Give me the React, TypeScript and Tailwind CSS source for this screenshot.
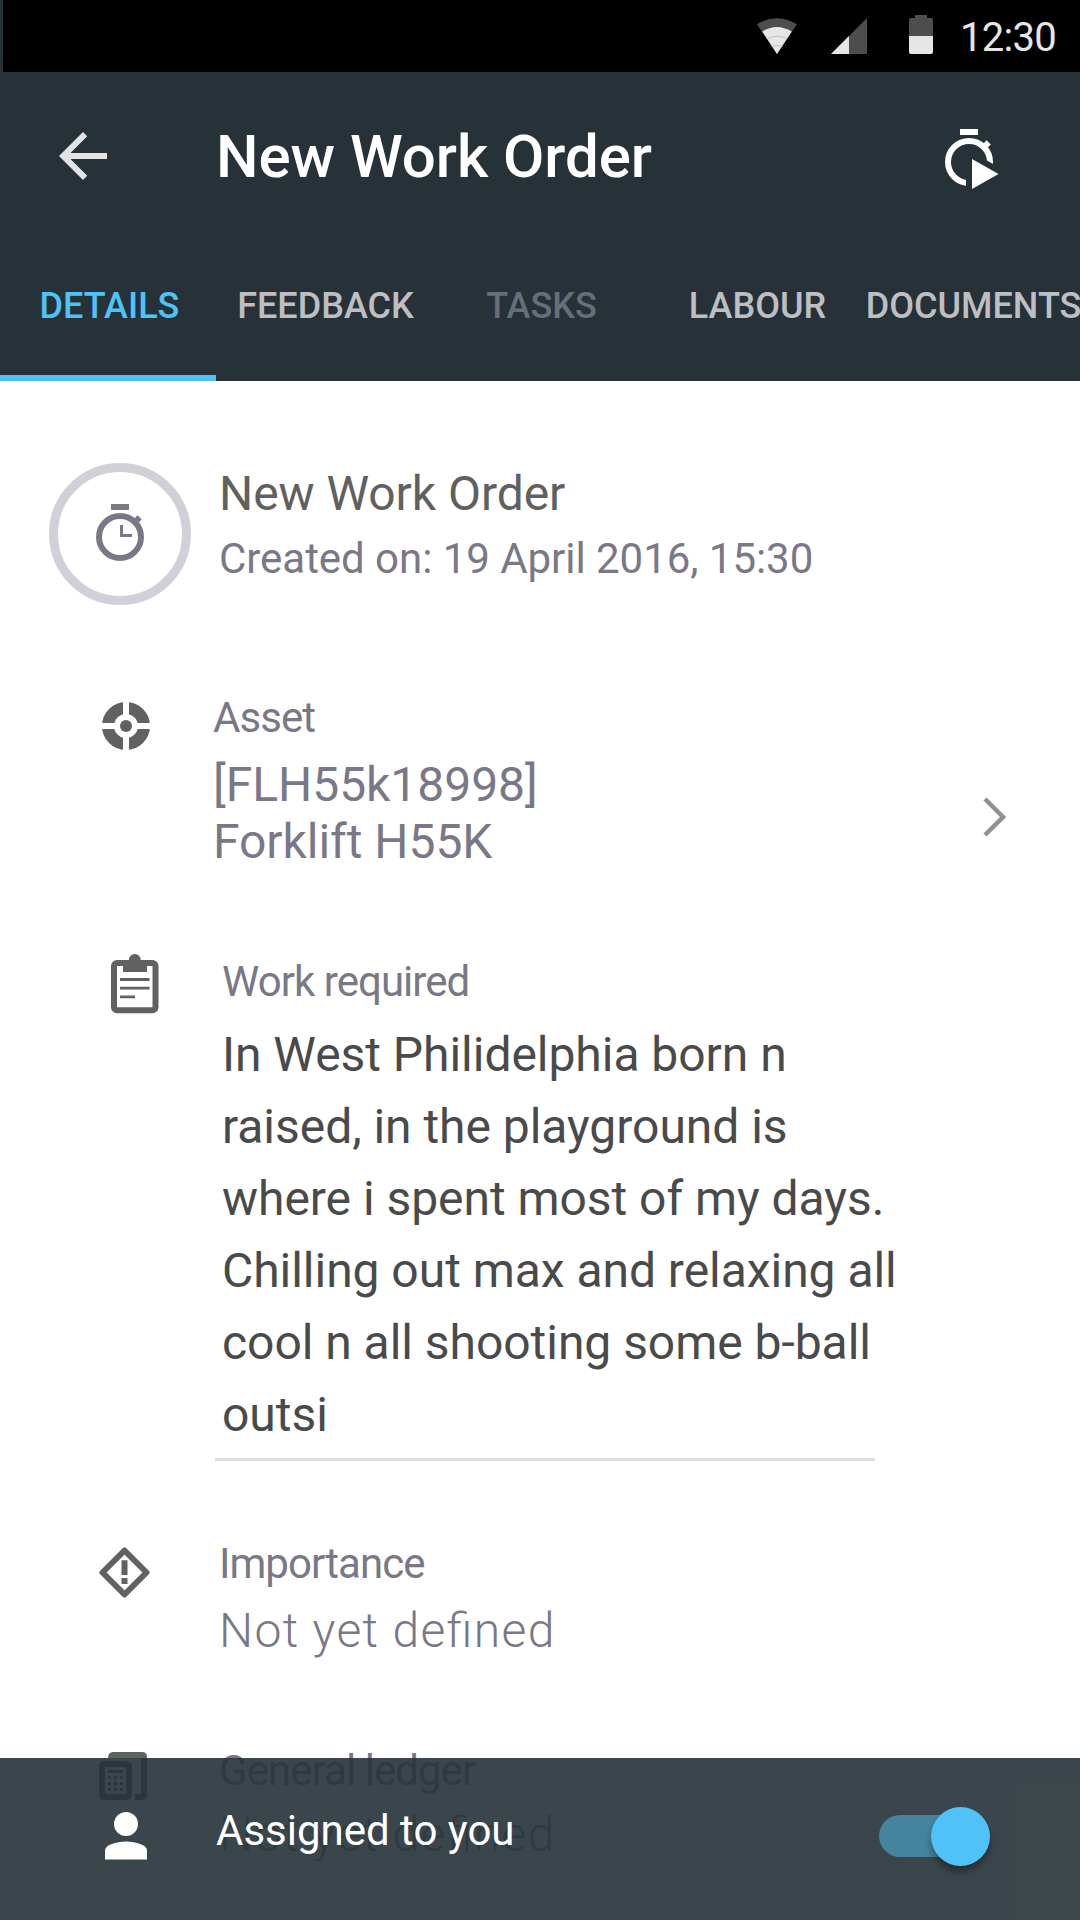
import type { ReactNode } from "react";

const tabs = [
  { label: "DETAILS", color: "text-[#4fc3f7]" },
  { label: "FEEDBACK", color: "text-[#bdbfc3]" },
  { label: "TASKS", color: "text-[#676e77]" },
  { label: "LABOUR", color: "text-[#bdbfc3]" },
  { label: "DOCUMENTS", color: "text-[#bdbfc3]" },
];

const workText = [
  "In West Philidelphia born n",
  "raised, in the playground is",
  "where i spent most of my days.",
  "Chilling out max and relaxing all",
  "cool n all shooting some b-ball",
  "outsi",
];

function WifiIcon() {
  return (
    <svg width="40" height="36" viewBox="0 0 40 36">
      <path d="M0 6.3Q20 -6 40 6.3L20 36Z" fill="#4d4d4d" />
      <path d="M5.2 13.6Q20 4.6 34.8 13.6L20 36Z" fill="#e6e6e6" />
      <path d="M11 20.5Q20 16 29 20.5M14.5 28.5Q20 26.5 25.5 28.5" fill="none" stroke="#b5b5b5" strokeWidth="0.8" />
    </svg>
  );
}

function SignalIcon() {
  return (
    <svg width="36" height="36" viewBox="0 0 36 36">
      <path d="M0 36L36 0V36Z" fill="#4d4d4d" />
      <path d="M0 36L18 18V36Z" fill="#e6e6e6" />
    </svg>
  );
}

function BatteryIcon() {
  return (
    <svg width="24" height="39" viewBox="0 0 24 39">
      <path d="M6 0H18V3H22Q24 3 24 5V21H0V5Q0 3 2 3H6Z" fill="#4d4d4d" />
      <path d="M0 21H24V37Q24 39 22 39H2Q0 39 0 37Z" fill="#e6e6e6" />
    </svg>
  );
}

function BackIcon() {
  return (
    <svg width="72" height="72" viewBox="0 0 24 24" fill="#e3e3e5">
      <path d="M20 11H7.83l5.59-5.59L12 4l-8 8 8 8 1.41-1.41L7.83 13H20v-2z" />
    </svg>
  );
}

function TimerPlayIcon() {
  return (
    <svg width="54" height="60" viewBox="0 0 54 60">
      <clipPath id="ringCut">
        <path d="M0 0H54V38.5L42 31.5H21V60H0Z" />
      </clipPath>
      <rect x="15" width="18" height="6" fill="#fff" />
      <circle cx="24" cy="33" r="21" fill="none" stroke="#fff" strokeWidth="6" clipPath="url(#ringCut)" />
      <path d="M39 18L43.7 13.3" stroke="#fff" strokeWidth="6" />
      <path d="M27 30L53.5 45L27 60Z" fill="#fff" />
    </svg>
  );
}

function TimerIcon() {
  return (
    <svg width="48" height="57" viewBox="0 0 48 57" fill="none" stroke="#7a7886">
      <path d="M15 3H33" strokeWidth="6" />
      <circle cx="24" cy="33" r="21" strokeWidth="6" />
      <path d="M39 18L43.7 13.3" strokeWidth="6" />
      <path d="M25.5 21V31.5H36" strokeWidth="3" />
    </svg>
  );
}

function AssetIcon() {
  return (
    <svg width="48" height="48" viewBox="0 0 48 48">
      <circle cx="24" cy="24" r="18" fill="none" stroke="#606260" strokeWidth="12" />
      <path d="M24 0V48M0 24H48" stroke="#fff" strokeWidth="6" />
      <circle cx="24" cy="24" r="6" fill="#606260" />
    </svg>
  );
}

function ClipboardIcon() {
  return (
    <svg width="48" height="60" viewBox="0 0 48 60" fill="#606260">
      <rect x="3" y="9" width="41.5" height="47.3" rx="3" fill="none" stroke="#606260" strokeWidth="6" />
      <circle cx="23.8" cy="6" r="6" />
      <path d="M12 9H36V18H12ZM9 24H38.500V27H9ZM9 32.700H38.500V35.500H9ZM9 41.500H24V44.300H9Z" />
    </svg>
  );
}

function ImportanceIcon() {
  return (
    <svg width="51" height="51" viewBox="0 0 51 51">
      <path d="M25.500 3.500L47.500 25.500L25.500 47.500L3.500 25.500Z" fill="none" stroke="#606260" strokeWidth="6" strokeLinejoin="round" />
      <path d="M22.500 13.300H28.500V28H22.500ZM22.500 31H28.500V37H22.500Z" fill="#606260" />
    </svg>
  );
}

function LedgerIcon() {
  return (
    <svg width="48" height="48" viewBox="0 0 48 48" fill="#606260">
      <path d="M9 6Q9 0 14 0H43Q48 0 48 5V43Q48 48 43 48H36V42H42V6Z" />
      <rect x="3" y="12" width="27" height="33" rx="2" fill="none" stroke="#606260" strokeWidth="6" />
      <path d="M9 18H24V21H9ZM9 24H12V27H9ZM15 24H18V27H15ZM21 24H24V27H21ZM9 30H12V33H9ZM15 30H18V33H15ZM21 30H24V33H21ZM9 36H12V39H9ZM15 36H18V39H15ZM21 36H24V39H21Z" />
    </svg>
  );
}

function PersonIcon() {
  return (
    <svg width="42" height="48" viewBox="0 0 42 48" fill="#fff">
      <circle cx="21" cy="12" r="12" />
      <path d="M0 47.500V38.500C0 33 11 29.500 21 29.500S42 33 42 38.500V47.500Z" />
    </svg>
  );
}

function Row({ icon, className, children }: { icon: ReactNode; className: string; children: ReactNode }) {
  return (
    <section className={`flex items-start ${className}`}>
      {icon}
      {children}
    </section>
  );
}

function Label({ children }: { children: ReactNode }) {
  return <p className="text-[42px] leading-[48px] tracking-[-0.95px]">{children}</p>;
}

function EmptyValue({ className }: { className: string }) {
  return (
    <p className={`text-[48px] font-light leading-[57px] tracking-[1.35px] [font-feature-settings:'liga'] ${className}`}>
      Not yet defined
    </p>
  );
}

export default function App() {
  return (
    <div className="relative flex h-[1920px] w-[1080px] flex-col overflow-hidden bg-white font-['Roboto',sans-serif]">
      <header className="h-[381px] shrink-0 bg-[#263238]">
        <div className="ml-[3px] flex h-[72px] items-start bg-black">
          <div className="ml-[754px] mt-[18px]"><WifiIcon /></div>
          <div className="ml-[34px] mt-[18px]"><SignalIcon /></div>
          <div className="ml-[42px] mt-[15px]"><BatteryIcon /></div>
          <span className="ml-[27px] mt-[14px] text-[40px] leading-[48px] tracking-[-0.7px] text-[#e6e6e6]">12:30</span>
        </div>
        <div className="flex h-[168px] items-start">
          <div className="ml-[47px] mt-12"><BackIcon /></div>
          <h1 className="ml-[97px] mt-[49px] w-[729px] text-[60px] font-medium leading-[72px] tracking-[-0.05px] text-white">New Work Order</h1>
          <div className="mt-[57px]"><TimerPlayIcon /></div>
        </div>
        <nav className="flex h-[141px]">
          {tabs.map((tab, i) => (
            <div
              key={tab.label}
              className={`flex h-full w-[216px] shrink-0 justify-center pl-[3px] pt-[42px] text-[36px] font-medium leading-[48px] ${tab.color} ${i === 0 ? "border-b-[6px] border-[#4fc3f7]" : ""}`}
            >
              {tab.label}
            </div>
          ))}
        </nav>
      </header>

      <main className="flex flex-col text-[#7a7886]">
        <Row
          className="ml-[49px] mt-[82px] h-[142px]"
          icon={
            <div className="flex size-[142px] items-start justify-center rounded-full border-[9px] border-[#d0d0d9] pt-8">
              <TimerIcon />
            </div>
          }
        >
          <div className="ml-7 mt-[2px]">
            <h2 className="text-[48px] leading-[57px] tracking-[-0.05px] text-[#606060]">New Work Order</h2>
            <p className="mt-[13px] text-[42px] leading-[48px] tracking-[-0.04px]">Created on: 19 April 2016, 15:30</p>
          </div>
        </Row>

        <Row className="ml-[101.500px] mt-[89px] h-[176px]" icon={<div className="mt-2"><AssetIcon /></div>}>
          <div className="ml-[63.500px] w-[770px]">
            <Label>Asset</Label>
            <p className="mt-[14px] text-[48px] leading-[57px] tracking-[-0.04px]">[FLH55k18998]<br />Forklift H55K</p>
          </div>
          <svg className="mt-[102px]" width="24" height="42" viewBox="0 0 24 42" fill="none" stroke="#919194" strokeWidth="4.500">
            <path d="M2 3L20 21L2 39" />
          </svg>
        </Row>

        <Row className="ml-[111px] mt-[84px] h-[506px]" icon={<ClipboardIcon />}>
          <div className="ml-[55.500px] mt-1">
            <div className="pl-[7.500px]"><Label>Work required</Label></div>
            <p className="mt-[13px] w-[660px] whitespace-nowrap border-b-[3px] border-[#dedede] pb-[7px] pl-[7.500px] text-[48px] leading-[72px] tracking-[-0.04px] text-[#4a4a4a]">
              {workText.map((line) => (
                <span key={line} className="block">{line}</span>
              ))}
            </p>
          </div>
        </Row>

        <Row className="ml-[99px] mt-[80px] h-[152px]" icon={<div className="mt-[7px]"><ImportanceIcon /></div>}>
          <div className="ml-[69px]">
            <Label>Importance</Label>
            <EmptyValue className="mt-[14px]" />
          </div>
        </Row>

        <Row className="ml-[99px] mt-[55px]" icon={<div className="mt-[5px]"><LedgerIcon /></div>}>
          <div className="ml-[72px]">
            <Label>General ledger</Label>
            <EmptyValue className="mt-[11px]" />
          </div>
        </Row>
      </main>

      <footer className="absolute inset-x-0 bottom-0 flex h-[162px] items-start bg-[#263238]/90">
        <div className="ml-[105px] mt-[54px]"><PersonIcon /></div>
        <p className="ml-[69px] mt-[49px] w-[663px] text-[42px] leading-[48px] text-white">Assigned to you</p>
        <div className="mt-[57px] flex h-[42px] w-[105px] items-center justify-end rounded-full bg-[#46839f]">
          <div className="-mr-[6px] size-[59px] shrink-0 rounded-full bg-[#4fc3f7] shadow-[0_6px_7px_rgba(0,0,0,0.35)]" />
        </div>
      </footer>
    </div>
  );
}
